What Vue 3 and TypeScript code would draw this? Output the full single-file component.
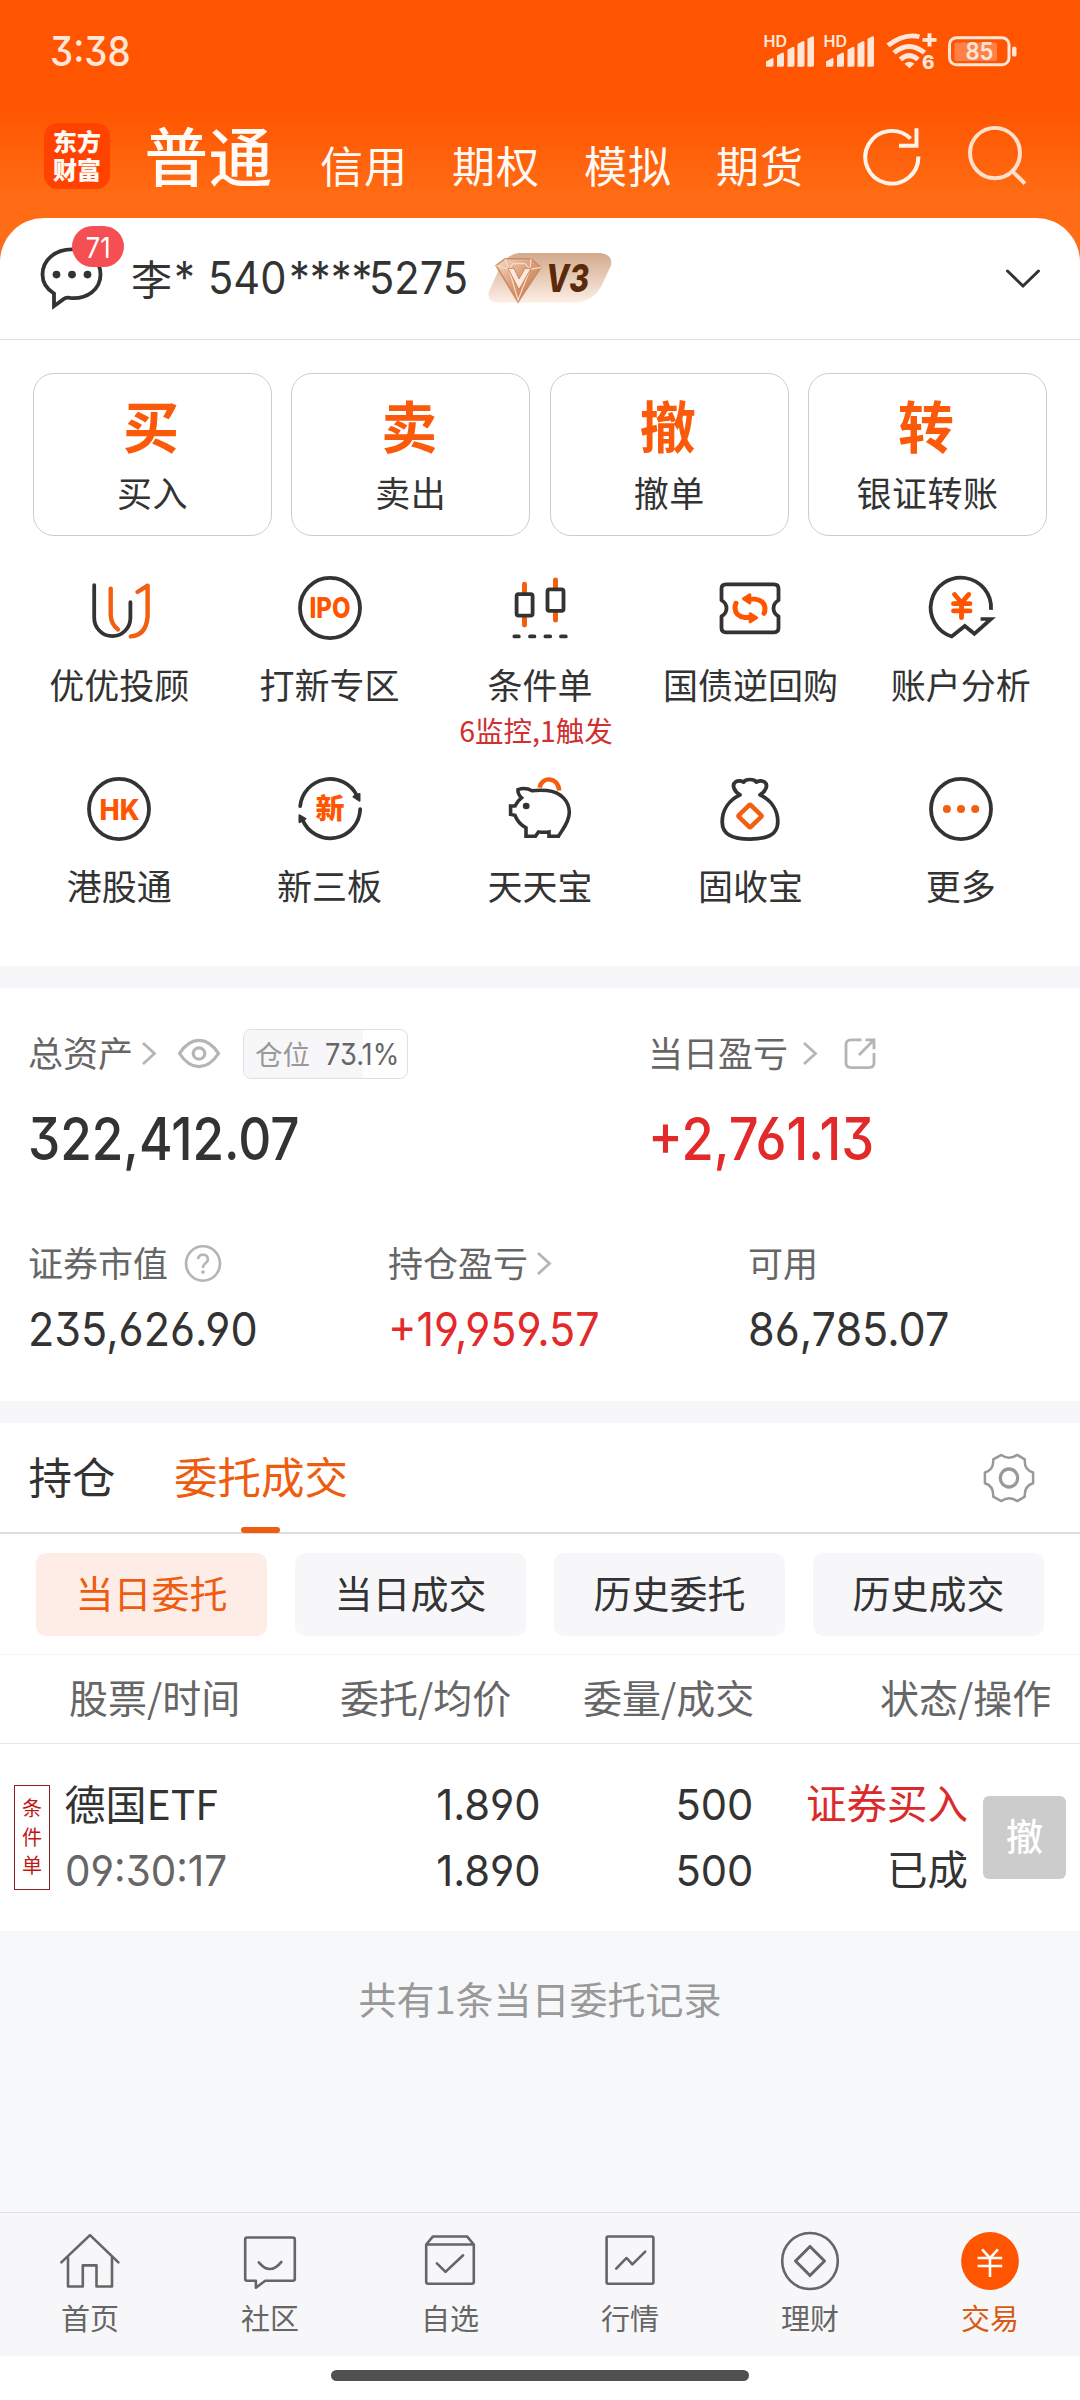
<script setup lang="ts">
const navItems: string[] = ['信用', '期权', '模拟', '期货']

const actions = [
  { glyph: '买', label: '买入' },
  { glyph: '卖', label: '卖出' },
  { glyph: '撤', label: '撤单' },
  { glyph: '转', label: '银证转账' },
]

interface Shortcut {
  icon: string
  label: string
  note?: string
}

const shortcuts: Shortcut[] = [
  { icon: 'advisor', label: '优优投顾' },
  { icon: 'ipo', label: '打新专区' },
  { icon: 'candles', label: '条件单', note: '6监控,1触发' },
  { icon: 'ticket', label: '国债逆回购' },
  { icon: 'analysis', label: '账户分析' },
  { icon: 'hk', label: '港股通' },
  { icon: 'newboard', label: '新三板' },
  { icon: 'piggy', label: '天天宝' },
  { icon: 'bag', label: '固收宝' },
  { icon: 'more', label: '更多' },
]

const filters: string[] = ['当日委托', '当日成交', '历史委托', '历史成交']
const position = 73.1

const tabs = [
  { icon: 'home', label: '首页' },
  { icon: 'community', label: '社区' },
  { icon: 'watch', label: '自选' },
  { icon: 'market', label: '行情' },
  { icon: 'wealth', label: '理财' },
  { icon: 'trade', label: '交易' },
]
</script>

<template>
  <div class="page">
    <header class="status">
      <span class="num clock">3:38</span>
      <svg class="status-icons" width="260" height="45.500" viewBox="0 0 260 47" preserveAspectRatio="none" fill="#ffe6d8">
        <g v-for="x in [0, 60]" :key="x" :transform="`translate(${x} 0)`">
          <text x="3.5" y="18.5" class="hd" textLength="23.5" lengthAdjust="spacingAndGlyphs">HD</text>
          <path d="M6 39v-5.500l6.500-3.500q1 0 1 1.500v6q0 1.500-1.500 1.500zM17 39V27.500l5.500-3.200q1.500 0 1.500 1.500V37.500q0 1.500-1.500 1.500zM27.500 39V21.500l5.500-3.200q1.500 0 1.500 1.500V37.500q0 1.500-1.500 1.500zM37.500 39V15.500l5.500-3.200q1.500 0 1.500 1.500V37.500q0 1.500-1.500 1.500zM47.500 39V10l5-2.500q1.500 0 1.500 1.500V37.500q0 1.500-1.500 1.500z" />
        </g>
        <g transform="translate(3.500 0)">
          <g fill="none" stroke="#ffe6d8" stroke-width="5">
            <path d="M124.500 17Q141 4 156 8" />
            <path d="M130.500 24.500Q145.500 11.500 161 24.500" />
            <path d="M137 31.500Q145.500 23.500 154.500 31.500" />
            <path d="M159 11.200h14M166 4.500v13.500" stroke-width="4" />
          </g>
          <path d="M146 40.500l-5-4.500q5-4.500 10 0z" />
          <text x="158.500" y="41.500" class="six">6</text>
          <rect x="191" y="14" width="42.500" height="19" rx="2" fill="#ff8148" />
          <rect x="186" y="9" width="59.500" height="28" rx="7" fill="none" stroke="#ffe6d8" stroke-width="3" />
          <rect x="248.500" y="18" width="4.500" height="10.500" rx="2" />
          <text x="202" y="32" class="pct" textLength="28" lengthAdjust="spacingAndGlyphs">85</text>
        </g>
      </svg>
    </header>

    <nav class="nav">
      <div class="logo"><span>东方</span><span>财富</span></div>
      <strong class="nav-main">普通</strong>
      <div class="nav-list">
        <span v-for="n in navItems" :key="n">{{ n }}</span>
      </div>
      <svg class="refresh" width="64" height="62" viewBox="0 0 64 64" preserveAspectRatio="none" fill="none" stroke="#fff3ea" stroke-width="4">
        <path d="M58.300 33.500A26.500 27.200 0 1 1 50.500 15" />
        <path d="M56.500 4.500V22.500H39" />
      </svg>
      <svg class="search" width="64" height="62" viewBox="0 0 64 64" preserveAspectRatio="none" fill="none" stroke="#ffe0cb" stroke-width="4">
        <ellipse cx="29" cy="30" rx="25" ry="26" />
        <path d="M45.500 48L59 61.500" />
      </svg>
    </nav>

    <main class="panel">
      <section class="account">
        <div class="bubble">
          <svg width="64" height="64" viewBox="0 0 64 66" preserveAspectRatio="none">
            <path d="M14 49C6 44 2.500 37 2.500 29.500C2.500 14 15.500 3.500 32 3.500S60.500 14 60.500 29.500S47 55 30 53.500C27 53 25 53.500 24 54.500L14 62Z" fill="none" stroke="#333" stroke-width="3.800" />
            <g fill="#333"><circle cx="16.500" cy="29.500" r="3.900" /><circle cx="32" cy="29.500" r="3.900" /><circle cx="47.500" cy="29.500" r="3.900" /></g>
          </svg>
          <span class="badge"><span class="num">71</span></span>
        </div>
        <div class="holder">
          <span class="surname">李</span><span class="num id1">*</span><span class="num id2">540</span><span class="num id3">****</span><span class="num id4">5275</span>
        </div>
        <svg class="vip" width="126" height="52" viewBox="0 0 126 54" preserveAspectRatio="none">
          <defs>
            <linearGradient id="vipBg" x1="0" y1="0" x2="0" y2="1">
              <stop offset="0" stop-color="#d2aa8c" /><stop offset="1" stop-color="#fdeee4" />
            </linearGradient>
            <linearGradient id="gem" x1="0" y1="0" x2="1" y2="1">
              <stop offset="0" stop-color="#f9dcc8" /><stop offset=".5" stop-color="#d99a72" /><stop offset="1" stop-color="#b9744c" />
            </linearGradient>
          </defs>
          <path d="M32 1H114Q126 3 124 14L115 34Q106 52 88 52.500H10Q-1 51 2 41L12 18Q18 3 32 1Z" fill="url(#vipBg)" />
          <path d="M9 14L18 7H44L54 16L31 52Z" fill="url(#gem)" stroke="#c98c66" stroke-width="1.500" />
          <path d="M9 14L22 18L31 50L43 18L54 16M22 18L18 7M43 18L44 7M22 18L26 12H38L43 18" fill="none" stroke="#f8dcc8" stroke-width="1.200" />
          <path d="M21 17H27L32 28L38 17H44L32 39Z" fill="#ffe9da" stroke="#c58a64" stroke-width="1" />
          <text x="59" y="41.500" class="vip-text" textLength="43" lengthAdjust="spacingAndGlyphs">V3</text>
        </svg>
        <svg class="down" width="36" height="22" viewBox="0 0 36 22" fill="none" stroke="#333" stroke-width="3" stroke-linecap="round">
          <path d="M2.500 3L18 18L33.500 3" />
        </svg>
      </section>

      <section class="actions">
        <div v-for="a in actions" :key="a.label" class="action">
          <b>{{ a.glyph }}</b>
          <span>{{ a.label }}</span>
        </div>
      </section>

      <section class="grid">
        <div v-for="s in shortcuts" :key="s.icon" class="cell">
          <svg width="72" height="70" viewBox="0 0 72 72" preserveAspectRatio="none" fill="none" stroke="#333" stroke-width="3.800" stroke-linecap="round" stroke-linejoin="round">
            <template v-if="s.icon === 'advisor'">
              <path d="M11.200 12.500V46a18.100 19 0 0 0 36.200 0V30" />
              <g stroke="#f2600f" stroke-width="4.400"><path d="M27.700 16V43Q28 53 35 58" /><path d="M54.500 19.500L64.600 13V45Q63 64 47.800 65.300" /></g>
            </template>
            <template v-else-if="s.icon === 'ipo'">
              <ellipse cx="36" cy="36" rx="30" ry="31" />
              <text x="15.500" y="46.500" class="glyph" font-size="29" textLength="41" lengthAdjust="spacingAndGlyphs">IPO</text>
            </template>
            <template v-else-if="s.icon === 'candles'">
              <path stroke="#f2600f" stroke-width="5" d="M20.500 11.500V20M20.500 46V53.500M51.500 7V15M51.500 41V48.500" />
              <rect x="12.600" y="21.800" width="16" height="22" rx="2" /><rect x="43.500" y="16.900" width="16" height="22" rx="2" />
              <path d="M10.400 65.200h4.400M26 65.200h4.400M41.400 65.200h4.800M57 65.200h4.800" />
            </template>
            <template v-else-if="s.icon === 'ticket'">
              <path d="M12 11.700H60Q64.500 11.700 64.500 16.200V28Q59.500 31 59.500 36.300T64.500 44.600V56.600Q64.500 61 60 61H12Q7.500 61 7.500 56.600V44.600Q12.500 41.500 12.500 36.300T7.500 28V16.200Q7.500 11.700 12 11.700Z" />
              <g v-for="r in [0, 180]" :key="r" :transform="`rotate(${r} 36 36.300)`" stroke="#ff5500">
                <path d="M37 26.800H41Q50.500 28 51 36.500Q51 39.500 50 41.500" stroke-width="5" />
                <path d="M29.500 26.500L35.800 22.300V30.800Z" fill="#ff5500" stroke-width="3" />
              </g>
            </template>
            <template v-else-if="s.icon === 'analysis'">
              <path stroke-linecap="butt" stroke-linejoin="miter" d="M66 38A30.200 31 0 1 0 26.700 65.300L39.800 54.500L49.400 62.500L66 47.300H55.600" />
              <path stroke="#ff5500" stroke-width="4.800" d="M29.500 22L36.500 30.500L43.800 22M36.500 31V46M28.500 31.500H45M28.500 39H45" />
            </template>
            <template v-else-if="s.icon === 'hk'">
              <ellipse cx="36" cy="36" rx="30" ry="31" />
              <text x="16.500" y="47" class="glyph" font-size="30" textLength="40" lengthAdjust="spacingAndGlyphs">HK</text>
            </template>
            <template v-else-if="s.icon === 'newboard'">
              <path d="M6.200 33A30 31 0 0 1 63 22.500M66.200 36A30 31 0 0 1 8.500 47" />
              <path d="M59.500 23.300L65.500 20.500L65.500 27.500ZM5.500 49.500V42.500L11.500 46Z" fill="#333" stroke-width="2" />
              <text x="36" y="46.500" class="glyph" font-size="29" text-anchor="middle">新</text>
            </template>
            <template v-else-if="s.icon === 'piggy'">
              <path stroke="#f2600f" stroke-width="4.600" stroke-linecap="butt" d="M35.500 14C38 2.500 53.500 2 55.300 17" />
              <path stroke-linejoin="miter" stroke-width="3.600" d="M14 16C20 14 25 15.500 28 17.200C33 16.500 38 16.500 43 17C57 18.500 65.500 28 65.300 40C65 50 58.500 57 54.500 64H45V59.500C40 60.500 37 60 34.500 59.500L31.500 64H22V55.300C16 52 13 48 11 42.500L6.600 41.500V32.800H11Q13.500 27.500 17.500 24.500Q13.500 20.500 14 16Z" />
              <circle cx="22.200" cy="32.900" r="3.400" fill="#333" stroke="none" />
            </template>
            <template v-else-if="s.icon === 'bag'">
              <path d="M26 21.500C20 18 17.500 11 21.500 8.200C24.500 6.500 28 7.500 29.500 8.300C32 4.800 40 4.800 42.500 8.300C44 7.500 47.500 6.500 50.500 8.200C54.500 11 52 18 46 21.500C57 27 63.800 37 63.800 49C63.800 62 54 67 36 67S8.200 62 8.200 49C8.200 37 15 27 26 21.500Z" />
              <rect x="27.500" y="34.700" width="17" height="17" rx="1.500" transform="rotate(45 36 43.200)" stroke="#f2600f" stroke-width="4.600" />
            </template>
            <template v-else>
              <ellipse cx="36" cy="36" rx="30" ry="31" />
              <g fill="#f2600f" stroke="none"><circle cx="21.900" cy="36" r="4" /><circle cx="36" cy="36" r="4" /><circle cx="50.200" cy="36" r="4" /></g>
            </template>
          </svg>
          <span class="cell-label">{{ s.label }}</span>
          <span v-if="s.note" class="cell-note">{{ s.note }}</span>
        </div>
      </section>

      <section class="assets">
        <div class="row-top">
          <div class="total">
            <div class="caption">
              <span>总资产</span>
              <svg class="chev" width="16" height="25" viewBox="0 0 16 25"><path d="M2 2L13.500 12.500L2 23" /></svg>
              <svg class="eye" width="44" height="31" viewBox="0 0 44 32" preserveAspectRatio="none" fill="none" stroke="#b5b5b5" stroke-width="3.200">
                <path d="M2.500 16Q11 2.500 22 2.500T41.500 16Q33 29.500 22 29.500T2.500 16Z" /><circle cx="22" cy="16" r="5.800" />
              </svg>
              <div class="ratio">
                <i :style="{ width: position + '%' }"></i>
                <span class="ratio-name">仓位</span><span class="num ratio-num">73.1%</span>
              </div>
            </div>
            <div class="big"><span class="num">322,412.07</span></div>
          </div>
          <div class="today">
            <div class="caption">
              <span>当日盈亏</span>
              <svg class="chev wide" width="16" height="25" viewBox="0 0 16 25"><path d="M2 2L13.500 12.500L2 23" /></svg>
              <svg class="share" width="34" height="33" viewBox="0 0 34 34" preserveAspectRatio="none" fill="none" stroke="#b5b5b5" stroke-width="2.800">
                <path d="M18.500 3H8Q3 3 3 8V26.500Q3 31.500 8 31.500H26Q31 31.500 31 26.500V16.500" /><path d="M22.500 3H31V12.500M31 3L16 18.500" />
              </svg>
            </div>
            <div class="big red"><span class="num">+2,761.13</span></div>
          </div>
        </div>
        <div class="row-sub">
          <div class="sub">
            <div class="caption">
              <span>证券市值</span>
              <svg class="help" width="40" height="39" viewBox="0 0 40 40" preserveAspectRatio="none" fill="none" stroke="#b5b5b5" stroke-width="2.700">
                <ellipse cx="20" cy="20" rx="17" ry="17.700" /><path d="M15 15.500Q15.500 11 20 11T25 15.500Q25 18 22.500 19.800T20 23.500V24.500" /><circle cx="20" cy="28.700" r="1.900" fill="#b5b5b5" stroke="none" />
              </svg>
            </div>
            <div class="mid"><span class="num">235,626.90</span></div>
          </div>
          <div class="sub">
            <div class="caption">
              <span>持仓盈亏</span>
              <svg class="chev" width="16" height="25" viewBox="0 0 16 25"><path d="M2 2L13.500 12.500L2 23" /></svg>
            </div>
            <div class="mid red"><span class="num">+19,959.57</span></div>
          </div>
          <div class="sub">
            <div class="caption"><span>可用</span></div>
            <div class="mid"><span class="num">86,785.07</span></div>
          </div>
        </div>
      </section>

      <section class="orders">
        <div class="order-tabs">
          <span>持仓</span>
          <span class="on">委托成交</span>
          <svg width="72" height="72" viewBox="0 0 72 72" fill="none" stroke="#999" stroke-width="2.500" stroke-linejoin="round">
            <path d="M28.400 12.900Q36 18.500 44.300 12.900L51.800 17.400Q51 28 60.100 30.500V41.200Q51 44 51.800 54.600L44.300 59.100Q36 53.500 28.400 59.100L20.200 54.600Q21 44 11.900 41.200V30.500Q21 28 20.200 17.400Z" />
            <ellipse cx="36" cy="36" rx="8.700" ry="9" stroke-width="3.300" />
          </svg>
        </div>
        <div class="filters">
          <span v-for="(f, i) in filters" :key="f" :class="{ on: i === 0 }">{{ f }}</span>
        </div>
        <div class="thead">
          <span class="c1">股票/时间</span><span class="c2">委托/均价</span><span class="c3">委量/成交</span><span class="c4">状态/操作</span>
        </div>
        <div class="order">
          <div class="flag"><span>条</span><span>件</span><span>单</span></div>
          <div class="o1"><span>德国<span class="latin">ETF</span></span><span class="gray"><span class="num">09:30:17</span></span></div>
          <div class="o2"><span class="num">1.890</span><span class="num">1.890</span></div>
          <div class="o3"><span class="num">500</span><span class="num">500</span></div>
          <div class="o4"><span class="buy">证券买入</span><span>已成</span></div>
          <div class="cancel">撤</div>
        </div>
      </section>
      <p class="summary">共有1条当日委托记录</p>
    </main>

    <footer class="tabbar">
      <div v-for="t in tabs" :key="t.icon" class="tab" :class="{ active: t.icon === 'trade' }">
        <svg width="72" height="70" viewBox="0 0 72 72" preserveAspectRatio="none" fill="none" stroke="#666" stroke-width="2.600" stroke-linecap="round" stroke-linejoin="round">
          <template v-if="t.icon === 'home'">
            <path d="M7.300 37.500L36 9.300L64.400 37.500" /><path d="M14 32.500V62.200H28.800V40.500H42.500V62.200H58V32.500" />
          </template>
          <template v-else-if="t.icon === 'community'">
            <path d="M13.200 11.900H58.800Q60.800 11.900 60.800 13.900V54.300Q60.800 56.300 58.800 56.300H31.200L21.900 63.500V56.300H13.200Q11.200 56.300 11.200 54.300V13.900Q11.200 11.900 13.200 11.900Z" />
            <path d="M24.800 37.400Q36 51.500 47.400 36.900" />
          </template>
          <template v-else-if="t.icon === 'watch'">
            <path d="M12.200 19.100L18.800 10.900H53.200L59.800 19.100V57.400Q59.800 59.400 57.800 59.400H14.200Q12.200 59.400 12.200 57.400ZM12.200 19.100H59.800" /><path d="M22.900 38.400L31.500 47.200L49.100 30.100" />
          </template>
          <template v-else-if="t.icon === 'market'">
            <rect x="12.600" y="10.900" width="46.800" height="48.500" rx="1.500" /><path d="M22.200 43.900L32.600 32.900L38.400 39.400L51.200 26.400" />
          </template>
          <template v-else-if="t.icon === 'wealth'">
            <ellipse cx="36" cy="36" rx="27.800" ry="28.900" /><path d="M36 21L50.500 36L36 51L21.500 36Z" stroke-width="3" />
          </template>
          <template v-else>
            <ellipse cx="36" cy="36" rx="28.900" ry="29.800" fill="#ff5500" stroke="none" />
            <path stroke="#fff" stroke-linecap="butt" d="M28.100 24L36 33L43.900 24M36 33V52.500M23.600 33H48.200M23.600 41.200H48.200" />
          </template>
        </svg>
        <span>{{ t.label }}</span>
      </div>
    </footer>
    <div class="gesture"><i></i></div>
  </div>
</template>

<style>
body {
  margin: 0;
  background: #fff;
}
</style>

<style scoped>
.page {
  width: 1080px;
  height: 2400px;
  overflow: hidden;
  display: flex;
  flex-direction: column;
  font-family: "Noto Sans CJK SC", "Noto Sans", sans-serif;
  color: #333;
  background: linear-gradient(#ff5500 0, #ff5500 106px, #ff6b14 195px, #ff6e18 270px) no-repeat 0 0 / 100% 290px #fff;
}
.page * {
  box-sizing: border-box;
}
.page svg {
  flex: none;
}
.num {
  display: inline-block;
  font-family: Inter, sans-serif;
  font-feature-settings: "cv03", "cv04", "cv09";
  transform: scaleX(0.88);
  transform-origin: left center;
  white-space: nowrap;
}
.red {
  color: #e22a2a;
}

.status {
  height: 100px;
  flex: none;
  padding: 29.500px 60px 0 49.500px;
  display: flex;
  justify-content: space-between;
}
.clock {
  font-size: 40.500px;
  line-height: 44px;
  font-weight: 500;
  color: #ffe6d8;
  transform: scaleX(0.91);
}
.status-icons {
  margin-top: -0.500px;
  overflow: visible;
}
.hd {
  font: 600 16.500px Inter, sans-serif;
}
.six {
  font: 800 19px Inter, sans-serif;
}
.pct {
  font: 600 25px Inter, sans-serif;
}

.nav {
  height: 118px;
  flex: none;
  display: flex;
  align-items: flex-start;
  padding-left: 44px;
  color: #fffaf5;
}
.logo {
  width: 66px;
  height: 66px;
  margin-top: 23px;
  border-radius: 14px;
  background: #ff4200;
  display: flex;
  flex-direction: column;
  align-items: center;
  padding-top: 6px;
  font-family: "Liberation Sans", "Noto Sans CJK SC", sans-serif;
  font-size: 24px;
  font-weight: 900;
  line-height: 28px;
}
.nav-main {
  margin: 8.500px 0 0 34.500px;
  width: 131.500px;
  font-size: 63.500px;
  letter-spacing: 0.800px;
  line-height: 88px;
  font-weight: 500;
  white-space: nowrap;
}
.nav-list {
  margin: 36px 0 0 44px;
  display: flex;
  gap: 44px;
  font-size: 43px;
  letter-spacing: 1px;
  line-height: 56px;
}
.refresh {
  margin: 24px 0 0 56px;
}
.search {
  margin: 24px 0 0 42px;
}

.panel {
  flex: 1;
  min-height: 0;
  background: #fff;
  border-radius: 44px 44px 0 0;
  display: flex;
  flex-direction: column;
}
.account {
  height: 122px;
  flex: none;
  border-bottom: 1px solid #e0e0e0;
  display: flex;
  align-items: flex-start;
  padding-left: 40px;
}
.bubble {
  position: relative;
  width: 65px;
  margin-top: 28px;
}
.badge {
  position: absolute;
  left: 32px;
  top: -20px;
  width: 52px;
  height: 41px;
  border-radius: 21px;
  background: #f54f54;
  color: #fff;
  font-size: 29px;
  line-height: 38px;
  text-align: center;
}
.badge .num {
  transform-origin: center;
}
.holder {
  margin: 28.500px 0 0 26px;
  width: 355.500px;
  display: flex;
  font-size: 44.500px;
  line-height: 62px;
}
.holder .num {
  transform: scaleX(0.935);
}
.surname {
  font-size: 41px;
  line-height: 60px;
  width: 43px;
}
.id1 {
  width: 33.500px;
}
.id2 {
  width: 81px;
}
.id3 {
  width: 80.500px;
}
.vip {
  margin-top: 34px;
}
.vip-text {
  font: italic 800 40px Inter, sans-serif;
  fill: #5b2a0c;
}
.down {
  margin: 49.500px 0 0 392px;
}

.actions {
  flex: none;
  margin: 33px 33px 0;
  display: flex;
  gap: 19.500px;
}
.action {
  flex: 1;
  height: 163px;
  border: 1px solid #ccc;
  border-radius: 21px;
  display: flex;
  flex-direction: column;
  align-items: center;
}
.action b {
  margin-top: 10px;
  padding-right: 3px;
  font-size: 56px;
  line-height: 80px;
  font-weight: 700;
  color: #fa5a0a;
}
.action span {
  font-size: 35px;
  line-height: 50px;
  letter-spacing: 0.500px;
  margin-top: 3px;
}

.grid {
  flex: none;
  height: 430px;
  padding: 37px 14px 0;
  display: grid;
  grid-template-columns: repeat(5, 1fr);
  grid-auto-rows: 201.300px;
}
.cell {
  display: flex;
  flex-direction: column;
  align-items: center;
}
.cell-label {
  margin-top: 15.500px;
  font-size: 35px;
  line-height: 50px;
}
.cell-note {
  padding-right: 8px;
  font-size: 28.500px;
  line-height: 41px;
  color: #d03030;
  white-space: nowrap;
}
.glyph {
  font-family: Inter, "Noto Sans CJK SC", sans-serif;
  font-weight: 800;
  fill: #ff5500;
  stroke: none;
}

.assets {
  flex: none;
  height: 457px;
  border-top: 22px solid #f7f7fa;
  border-bottom: 22px solid #f7f7fa;
  padding-left: 28px;
}
.caption {
  display: flex;
  align-items: center;
  height: 52px;
  font-size: 35px;
  line-height: 52px;
  color: #666;
}
.caption svg {
  margin-top: 3px;
}
.chev {
  margin-left: 8px;
  fill: none;
  stroke: #b5b5b5;
  stroke-width: 2.800;
}
.chev.wide {
  margin-left: 14px;
}
.eye {
  margin-left: 20px;
}
.row-top {
  display: flex;
  padding-top: 37.500px;
}
.total {
  width: 620px;
  flex: none;
}
.ratio {
  position: relative;
  margin: 4px 0 0 22px;
  width: 165px;
  height: 50px;
  border: 1px solid #e0e0e0;
  border-radius: 8px;
  overflow: hidden;
  display: flex;
  padding-left: 11px;
  line-height: 47px;
}
.ratio i {
  position: absolute;
  left: 0;
  top: 0;
  height: 100%;
  background: #f7f7fa;
}
.ratio span {
  position: relative;
}
.ratio-name {
  font-size: 27.500px;
  color: #999;
  width: 70px;
}
.ratio-num {
  font-size: 29.500px;
  line-height: 49px;
  transform: scaleX(0.92);
}
.share {
  margin-left: 25px;
}
.big {
  height: 76px;
  margin-top: 19px;
  font-size: 58.700px;
  line-height: 76px;
  font-weight: 500;
}
.total .big .num {
  transform: scaleX(0.873);
}
.today .big .num {
  transform: scaleX(0.893);
}
.row-sub {
  display: flex;
  margin-top: 63.500px;
}
.sub {
  width: 360px;
  flex: none;
}
.help {
  margin-left: 14.500px;
}
.mid {
  margin-top: 8px;
  font-size: 46.800px;
  line-height: 60px;
}
.mid .num {
  transform: scaleX(0.922);
}

.orders {
  flex: none;
  height: 508px;
}
.order-tabs {
  height: 111px;
  border-bottom: 2px solid #ddd;
  padding: 0 35px 4px 28.500px;
  display: flex;
  align-items: center;
  font-size: 43.500px;
  line-height: 60px;
}
.order-tabs .on {
  position: relative;
  margin-left: 58.500px;
  color: #ee5c10;
}
.order-tabs .on::after {
  content: "";
  position: absolute;
  left: 50%;
  bottom: -27px;
  width: 39px;
  height: 6px;
  margin-left: -20px;
  border-radius: 3px;
  background: #ee5c10;
}
.order-tabs svg {
  margin: 4px 0 0 auto;
}
.filters {
  display: flex;
  gap: 28px;
  height: 121px;
  padding: 19px 36px 0;
  border-bottom: 1px solid #f5f5f5;
}
.filters span {
  flex: 1;
  height: 83px;
  border-radius: 10px;
  background: #f7f7fa;
  font-size: 38px;
  line-height: 78px;
  text-align: center;
}
.filters .on {
  background: #feede6;
  color: #ee5c10;
}
.thead {
  height: 89px;
  border-bottom: 1px solid #e8e8e8;
  display: flex;
  padding-left: 69px;
  font-size: 39px;
  line-height: 83px;
  color: #666;
}
.c1 {
  width: 271px;
}
.c2 {
  width: 243px;
}
.c3 {
  width: 297px;
}
.order {
  height: 187px;
  display: flex;
  padding-top: 27px;
  padding-left: 14px;
  font-size: 41px;
  line-height: 66px;
}
.order > div {
  display: flex;
  flex-direction: column;
}
.order .flag {
  width: 36px;
  height: 105px;
  margin-top: 14px;
  border: 1px solid #96201f;
  color: #c01818;
  font-size: 20px;
  line-height: 28.500px;
  align-items: center;
  padding-top: 8px;
}
.order .o1 {
  width: 241.500px;
  margin: -2px 0 0 14.500px;
}
.latin {
  font-size: 41px;
}
.gray {
  color: #666;
}
.o1 .num,
.o2 .num,
.o3 .num {
  font-size: 43px;
}
.order .o2 {
  width: 235px;
  align-items: flex-end;
}
.order .o3 {
  width: 212.500px;
  align-items: flex-end;
}
.o1 .num {
  transform: scaleX(0.94);
}
.o2 .num,
.o3 .num {
  transform: scaleX(0.97);
  transform-origin: right center;
}
.order .o4 {
  width: 214.500px;
  margin-top: -2px;
  align-items: flex-end;
  font-size: 40.500px;
}
.buy {
  color: #dc2a2a;
}
.order .cancel {
  width: 83px;
  height: 83px;
  margin: 25px 0 0 15px;
  border-radius: 6px;
  background: #ccc;
  color: #fff;
  font-size: 37px;
  font-weight: 500;
  line-height: 79px;
  align-items: center;
}
.summary {
  flex: 1;
  margin: 0;
  padding-top: 39.500px;
  background: #f7f8fa;
  text-align: center;
  font-size: 38px;
  line-height: 54px;
  color: #999;
}

.tabbar {
  flex: none;
  height: 144px;
  border-top: 1px solid #e0e0e0;
  background: #f7f7fa;
  display: flex;
  padding-top: 13px;
}
.tab {
  width: 180px;
  display: flex;
  flex-direction: column;
  align-items: center;
  font-size: 29px;
  line-height: 42px;
  color: #666;
}
.tab.active {
  color: #d85a14;
}
.gesture {
  flex: none;
  height: 44px;
  background: #fff;
  display: flex;
  justify-content: center;
  padding-top: 14px;
}
.gesture i {
  width: 418px;
  height: 11px;
  border-radius: 6px;
  background: #505050;
}
</style>
